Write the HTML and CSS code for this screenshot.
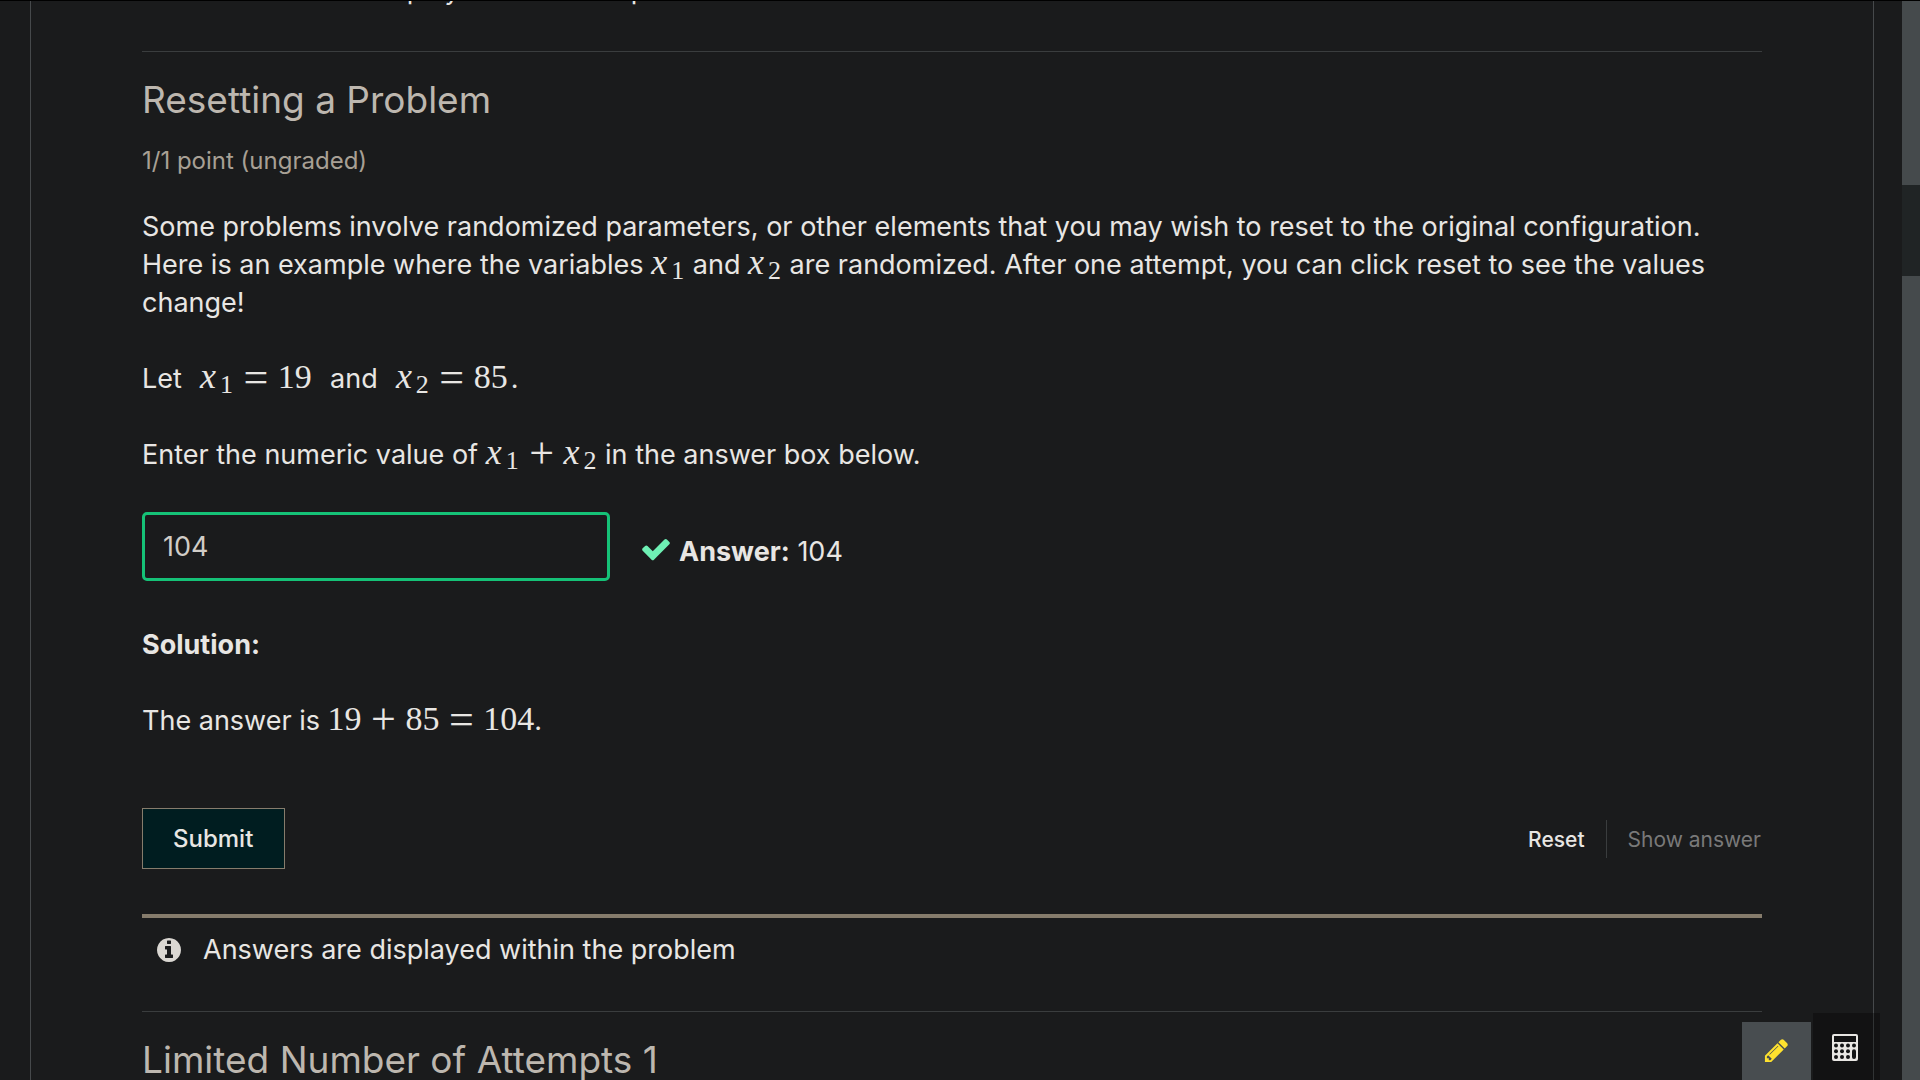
FILE: index.html
```html
<!DOCTYPE html>
<html lang="en">
<head>
<meta charset="utf-8">
<title>Resetting a Problem</title>
<link rel="stylesheet" href="styles.css">
</head>
<body>
<div class="window">
  <div class="viewport">
    <main class="course">
      <section class="problem">
        <p class="notice-text previous">Answers are displayed within the problem</p>
      </section>

      <section class="problem">
        <h2 class="title">Resetting a Problem</h2>
        <p class="points">1/1 point (ungraded)</p>
        <form class="body">
          <p>Some problems involve randomized parameters, or other elements that you may wish to reset to the original configuration. Here is an example where the variables <span class="math"><i>x</i><sub>1</sub></span> and <span class="math"><i>x</i><sub>2</sub></span> are randomized. After one attempt, you can click reset to see the values change!</p>
          <p class="given">Let &nbsp;<span class="math"><i>x</i><sub>1</sub> <span class="op">=</span> 19</span>&nbsp; and &nbsp;<span class="math"><i>x</i><sub>2</sub> <span class="op">=</span> 85</span>.</p>
          <p><label for="answer">Enter the numeric value of <span class="math"><i>x</i><sub>1</sub> <span class="op">+</span> <i>x</i><sub>2</sub></span> in the answer box below.</label></p>
          <div class="response">
            <input class="answer" id="answer" type="text" value="104">
            <svg class="check" viewBox="0 0 1792 1792" aria-hidden="true"><path d="M1671 566q0 40-28 68l-724 724-136 136q-28 28-68 28t-68-28l-136-136-362-362q-28-28-28-68t28-68l136-136q28-28 68-28t68 28l294 295 656-657q28-28 68-28t68 28l136 136q28 28 28 68z"/></svg>
            <p class="result"><strong>Answer:</strong> 104</p>
          </div>
          <p><strong>Solution:</strong></p>
          <p>The answer is <span class="math">19 <span class="op">+</span> 85 <span class="op">=</span> 104</span>.</p>
          <div class="actions">
            <button class="submit" type="button">Submit</button>
            <div class="secondary">
              <button class="link" type="button">Reset</button>
              <button class="link" type="button" disabled>Show answer</button>
            </div>
          </div>
        </form>
        <div class="notice">
          <svg class="info" viewBox="0 0 1792 1792" aria-hidden="true"><path d="M1152 1376v-160q0-14-9-23t-23-9h-96v-512q0-14-9-23t-23-9h-320q-14 0-23 9t-9 23v160q0 14 9 23t23 9h96v320h-96q-14 0-23 9t-9 23v160q0 14 9 23t23 9h448q14 0 23-9t9-23zm-128-896v-160q0-14-9-23t-23-9h-192q-14 0-23 9t-9 23v160q0 14 9 23t23 9h192q14 0 23-9t9-23zm640 416q0 209-103 385.5t-279.5 279.5-385.5 103-385.5-103-279.5-279.5-103-385.5 103-385.5 279.5-279.5 385.5-103 385.5 103 279.5 279.5 103 385.5z"/></svg>
          <p class="notice-text">Answers are displayed within the problem</p>
        </div>
      </section>

      <section class="problem">
        <h2 class="title">Limited Number of Attempts 1</h2>
      </section>
    </main>
  </div>
  <div class="scrollbar"><div class="thumb"></div></div>
  <div class="tools">
    <button class="tool notes" type="button" aria-label="Notes">
      <svg class="pencil" viewBox="0 0 1792 1792" aria-hidden="true"><path d="M491 1536l91-91-235-235-91 91v107h128v128h107zm523-928q0-22-22-22-10 0-17 7l-542 542q-7 7-7 17 0 22 22 22 10 0 17-7l542-542q7-7 7-17zm-54-192l416 416-832 832h-416v-416zm683 96q0 53-37 90l-166 166-416-416 166-165q36-38 90-38 53 0 91 38l235 234q37 39 37 91z"/></svg>
    </button>
    <button class="tool calculator" type="button" aria-label="Calculator">
      <svg class="calc" viewBox="0 0 26 27" aria-hidden="true">
        <path fill-rule="evenodd" d="M2 0h22q2 0 2 2v23q0 2-2 2H2q-2 0-2-2V2q0-2 2-2zM2 2v6h22V2z"/>
        <g class="keys"><circle cx="4" cy="11.500" r="2"/><circle cx="10" cy="11.500" r="2"/><circle cx="16" cy="11.500" r="2"/><circle cx="22" cy="11.500" r="2"/><circle cx="4" cy="17.250" r="2"/><circle cx="10" cy="17.250" r="2"/><circle cx="16" cy="17.250" r="2"/><circle cx="4" cy="23" r="2"/><circle cx="10" cy="23" r="2"/><circle cx="16" cy="23" r="2"/><rect x="20" y="15.250" width="4" height="9.750" rx="2"/></g>
      </svg>
    </button>
  </div>
</div>
</body>
</html>
```
FILE: styles.css
```css
* { box-sizing: border-box; }

body {
  margin: 0;
  background: #1a1b1c;
  color: #e8e6e3;
  font-family: Inter, "Liberation Sans", sans-serif;
  font-size: 27px;
  line-height: 38px;
}

p, h2 { margin: 0; }
button, input { font: inherit; color: inherit; }

.window {
  display: flex;
  height: 100vh;
  overflow: hidden;
  border-top: 1px solid #000;
}

.viewport {
  flex: 1;
  min-width: 0;
  padding: 0 28px 0 30px;
}

.course {
  margin-top: -30px;
  padding: 0 111px;
  border: solid #46494b;
  border-width: 0 1px;
}

.problem + .problem {
  margin-top: 42px;
  padding-top: 21px;
  border-top: 1px solid #3a3d3e;
}

.previous { padding-left: 61px; }

.title {
  color: #bdb7af;
  font-size: 37px;
  font-weight: 400;
  line-height: 54px;
}

.points {
  margin-top: 18px;
  color: #a8a095;
  font-size: 24px;
  line-height: 32px;
}

.body {
  display: flex;
  flex-direction: column;
  gap: 38px;
  margin-top: 31px;
}

.math {
  font-family: "Liberation Serif", serif;
  font-size: 34px;
  line-height: 0;
  white-space: nowrap;
}

.math i {
  margin-right: 4px;
  font-size: 36px;
}

.math sub {
  margin-right: 1px;
  font-size: 26px;
  line-height: 0;
  vertical-align: -5px;
}

.op {
  margin: 0 1px;
  font-size: 44px;
  vertical-align: -4px;
}

.given .math { margin: 0 3px; }

.response {
  display: flex;
  align-items: center;
  margin-bottom: 7px;
}

.answer {
  width: 468px;
  height: 69px;
  padding: 0 18px;
  border: 3px solid #15c277;
  border-radius: 5px;
  background: transparent;
  color: #d1cdc7;
}

.check {
  width: 32px;
  height: 32px;
  margin: 4px 0 0 30px;
  fill: #6ef0b4;
}

.result { margin: 10px 0 0 7px; }

.actions {
  display: flex;
  align-items: center;
  justify-content: space-between;
  margin-top: 30px;
}

.submit {
  padding: 0 31px 0 30px;
  border: 1px solid #867c6c;
  background: #001d20;
  font-size: 24px;
  font-weight: 500;
  line-height: 59px;
}

.secondary {
  display: flex;
  padding-right: 1px;
}

.link {
  padding: 2px 0 0 21px;
  border: 0;
  background: none;
  font-size: 21px;
  font-weight: 500;
  line-height: 36px;
}

.link + .link {
  margin-left: 21px;
  border-left: 1px solid #3a3d3e;
}

.link:disabled {
  color: #797979;
  font-weight: 400;
}

.notice {
  display: flex;
  align-items: center;
  gap: 20px;
  margin-top: 45px;
  padding: 13px 0 0 13px;
  border-top: 4px solid #867c6c;
}

.info {
  width: 28px;
  height: 28px;
  fill: #dad7d2;
}

.scrollbar {
  width: 18px;
  padding-top: 184px;
  background: #454a4c;
}

.thumb {
  height: 91px;
  background: #202425;
}

.tools {
  position: fixed;
  right: 40px;
  bottom: 0;
  display: flex;
  align-items: flex-end;
  gap: 2px;
}

.tool {
  display: flex;
  justify-content: center;
  border: 0;
}

.notes {
  width: 69px;
  height: 58px;
  padding: 15px 0 0;
  background: #484d50;
}

.calculator {
  width: 67px;
  height: 67px;
  padding: 21px 3px 0 0;
  background: rgba(0, 0, 0, .3);
}

.pencil {
  width: 27px;
  height: 27px;
  fill: #ffe22e;
}

.calc {
  width: 26px;
  height: 27px;
  fill: #e8e6e3;
}

.keys { fill: #131415; }
```
